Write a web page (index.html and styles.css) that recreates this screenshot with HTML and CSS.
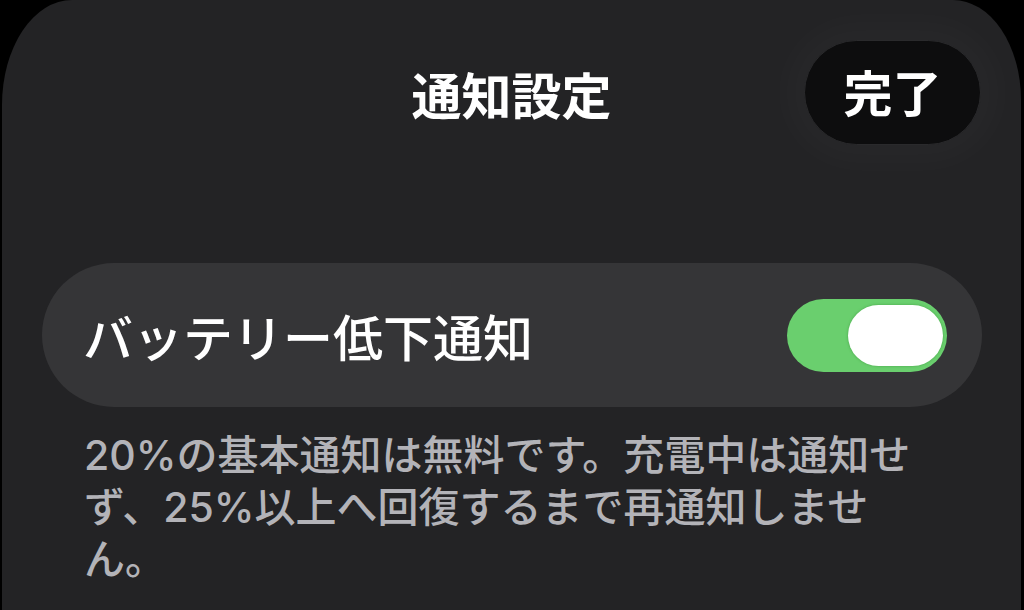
FILE: index.html
```html
<!DOCTYPE html>
<html lang="ja">
<head>
<meta charset="utf-8">
<title>通知設定</title>
<link rel="stylesheet" href="styles.css">
</head>
<body>
<div class="sheet">
  <header class="header">
    <div class="spacer"></div>
    <h1 class="title">通知設定</h1>
    <div class="actions">
      <button class="done">完了</button>
    </div>
  </header>
  <section class="card">
    <span class="label">バッテリー低下通知</span>
    <span class="toggle"><span class="knob"></span></span>
  </section>
  <p class="note">20%の基本通知は無料です。充電中は通知せず、25%以上へ回復するまで再通知しません。</p>
</div>
</body>
</html>
```

FILE: styles.css
```css
html, body {
  margin: 0;
  padding: 0;
  background: #000;
  height: 100%;
  overflow: hidden;
}
body {
  font-family: "Noto Sans CJK JP", "Noto Sans", sans-serif;
  color: #fff;
}
.sheet {
  margin: 0 3px 0 2px;
  height: 100%;
  box-sizing: border-box;
  overflow: hidden;
  background: #232325;
  border-radius: 70px 68px 0 0 / 105px 100px 0 0;
  display: flex;
  flex-direction: column;
}
.header {
  display: grid;
  grid-template-columns: 1fr auto 1fr;
  align-items: center;
  padding: 40px 40px 0 40px;
  height: 105px;
  flex: none;
}
.title {
  margin: 0;
  font-size: 50px;
  font-weight: 700;
  line-height: 1;
  text-align: center;
  letter-spacing: 0;
}
.actions {
  display: flex;
  justify-content: flex-end;
}
.done {
  width: 177px;
  height: 105px;
  border-radius: 52.5px;
  background: #0d0d0e;
  border: 1px solid #2a2a2c;
  color: #fff;
  font-family: "Noto Sans CJK JP", sans-serif;
  font-size: 49px;
  font-weight: 700;
  line-height: 1;
  padding: 0 0 4px;
  box-shadow: 0 0 30px 22px rgba(255, 255, 255, 0.018);
}
.card {
  flex: none;
  margin: 118px 39px 0 40px;
  height: 144px;
  border-radius: 72px;
  background: #353537;
  display: flex;
  align-items: center;
  justify-content: space-between;
  padding: 0 35px 0 41px;
}
.label {
  font-size: 50px;
  font-weight: 500;
  line-height: 1;
  letter-spacing: 0;
}
.toggle {
  width: 160px;
  height: 73px;
  border-radius: 36.5px;
  background: #6acf6e;
  display: flex;
  align-items: center;
  justify-content: flex-end;
  padding-right: 4px;
  box-sizing: border-box;
}
.knob {
  width: 95px;
  height: 61px;
  border-radius: 30.5px;
  background: #fff;
  box-shadow: 0 0 2px 1px rgba(60, 150, 60, 0.35);
}
.note {
  margin: 22px 0 0 82px;
  width: 840px;
  font-family: Inter, "Noto Sans CJK JP", sans-serif;
  font-size: 41px;
  font-weight: 500;
  line-height: 52px;
  color: #b3b3b8;
  line-break: strict;
}
```
